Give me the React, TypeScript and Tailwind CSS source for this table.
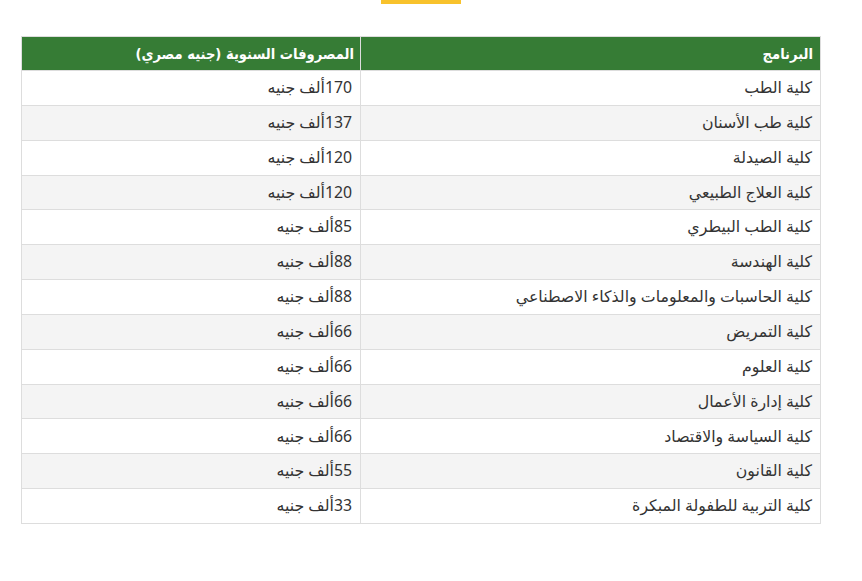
import React from "react";

const rows: [string, string][] = [
  ["كلية الطب", "170"],
  ["كلية طب الأسنان", "137"],
  ["كلية الصيدلة", "120"],
  ["كلية العلاج الطبيعي", "120"],
  ["كلية الطب البيطري", "85"],
  ["كلية الهندسة", "88"],
  ["كلية الحاسبات والمعلومات والذكاء الاصطناعي", "88"],
  ["كلية التمريض", "66"],
  ["كلية العلوم", "66"],
  ["كلية إدارة الأعمال", "66"],
  ["كلية السياسة والاقتصاد", "66"],
  ["كلية القانون", "55"],
  ["كلية التربية للطفولة المبكرة", "33"],
];

export default function App() {
  return (
    <div className="w-[862px] h-[581px] bg-white" style={{ fontFamily: '"Noto Sans", "DejaVu Sans", sans-serif' }}>
      <div className="w-[800px] ml-[21px]">
        <div className="flex justify-center">
          <div className="w-[80px] h-[4px] bg-[#f8c22c]" />
        </div>
        <table dir="rtl" className="mt-[32px] w-[800px] border-collapse text-[15.8px] text-[#333]">
          <thead>
            <tr className="bg-[#367c35] text-white h-[34px]" style={{ fontFamily: '"DejaVu Sans Condensed", "DejaVu Sans", sans-serif' }}>
              <th className="w-[460px] border border-[#ddd] text-right font-bold text-[14.6px] pl-2 pr-[7px] py-0">البرنامج</th>
              <th className="border border-[#ddd] text-right font-bold text-[14.6px] pl-2 pr-[6px] py-0">المصروفات السنوية (جنيه مصري)</th>
            </tr>
          </thead>
          <tbody>
            {rows.map(([name, fee], i) => (
              <tr key={i} className={`h-[34.85px] ${i % 2 === 1 ? "bg-[#f4f4f4]" : "bg-white"}`}>
                <td className="border border-[#ddd] px-2 py-0 text-right">{name}</td>
                <td className="border border-[#ddd] px-2 py-0 text-right">{fee}ألف جنيه</td>
              </tr>
            ))}
          </tbody>
        </table>
      </div>
    </div>
  );
}
